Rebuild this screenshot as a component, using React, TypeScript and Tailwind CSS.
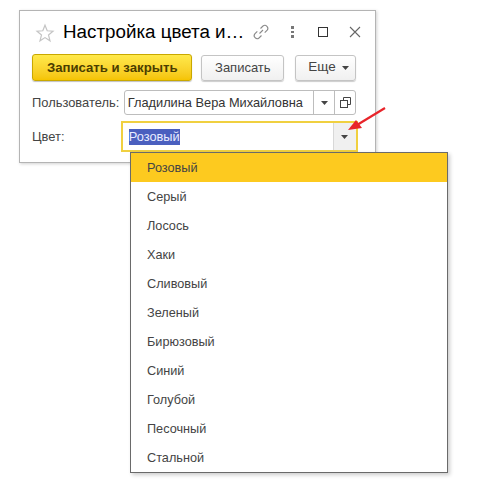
import React from "react";

const items = ["Розовый","Серый","Лосось","Хаки","Сливовый","Зеленый","Бирюзовый","Синий","Голубой","Песочный","Стальной"];

function Caret({ className = "" }: { className?: string }) {
  return (
    <svg width="7" height="4" viewBox="0 0 7 4" className={className}>
      <path d="M0 0H7L3.5 4Z" fill="#444" />
    </svg>
  );
}

export default function App() {
  return (
    <div className="relative w-[494px] h-[486px] bg-white overflow-hidden pt-[10px] pl-[19px] font-['Liberation_Sans',Arial,sans-serif] text-[#333]">
      <div className="w-[357px] h-[153px] bg-white border border-[#b4b4b4] shadow-[1px_1px_3px_rgba(0,0,0,0.18)] pl-[12px] pr-[19px] flex flex-col">
        <div className="h-[42px] flex items-center shrink-0">
          <svg width="20" height="20" viewBox="0 0 20 20" className="ml-[3px] mt-[1px] shrink-0">
            <path d="M10 2.2L12.2 7.8L18 8.2L13.5 12L15 17.8L10 14.6L5 17.8L6.5 12L2 8.2L7.8 7.8Z" fill="none" stroke="#c4c4c4" strokeWidth="1.2" />
          </svg>
          <span className="ml-[8px] text-[18.8px] leading-none text-black whitespace-nowrap w-[183px]">Настройка цвета и…</span>
          <svg width="18" height="18" viewBox="0 0 18 18" className="ml-[8px] shrink-0" fill="none" stroke="#8a8a8a" strokeWidth="1.1">
            <path d="M7.5 10.5L11 7" />
            <path d="M8.5 5.5L11 3a3 3 0 0 1 4.2 4.2L12.7 9.7" />
            <path d="M9.5 12.5L7 15a3 3 0 0 1-4.2-4.2L5.3 8.3" />
          </svg>
          <div className="ml-[21px] flex flex-col gap-[2px] shrink-0">
            <span className="w-[3px] h-[2.5px] bg-[#777]" />
            <span className="w-[3px] h-[2.5px] bg-[#777]" />
            <span className="w-[3px] h-[2.5px] bg-[#777]" />
          </div>
          <span className="ml-[24px] w-[10px] h-[10px] border-[1.5px] border-[#333] shrink-0" />
          <svg width="12" height="12" viewBox="0 0 12 12" className="ml-[21px] shrink-0" stroke="#666" strokeWidth="1.1">
            <path d="M1 1L11 11M11 1L1 11" />
          </svg>
        </div>
        <div className="h-[27px] flex items-center shrink-0 mt-[1px]">
          <button className="w-[161px] h-[27px] rounded-[3px] border border-[#c9a800] bg-gradient-to-b from-[#ffe94a] to-[#f5c400] shadow-[0_1px_1px_rgba(0,0,0,0.25)] text-[13.2px] font-bold text-[#4a3d00]">Записать и закрыть</button>
          <button className="ml-[9px] w-[83px] h-[26px] rounded-[3px] border border-[#c4c4c4] bg-gradient-to-b from-white to-[#f0f0f0] shadow-[0_1px_1px_rgba(0,0,0,0.2)] text-[13px] text-[#444]">Записать</button>
          <button className="ml-[11px] w-[61px] h-[26px] rounded-[3px] border border-[#c4c4c4] bg-gradient-to-b from-white to-[#f0f0f0] shadow-[0_1px_1px_rgba(0,0,0,0.2)] text-[13.5px] text-[#444] flex items-center justify-center gap-[6px] pl-[6px]">
            Еще <Caret />
          </button>
        </div>
        <div className="h-[25px] mt-[9px] flex items-center shrink-0">
          <span className="w-[92px] text-[12.9px] text-[#444] whitespace-nowrap">Пользователь:</span>
          <div className="w-[233px] h-[25px] rounded-[3px] border border-[#bdbdbd] flex items-center text-[12.8px] text-[#333]">
            <span className="flex-1 pl-[3px] whitespace-nowrap overflow-hidden">Гладилина Вера Михайловна</span>
            <span className="w-[21px] h-full border-l border-[#bdbdbd] flex items-center justify-center"><Caret /></span>
            <span className="w-[21px] h-full border-l border-[#bdbdbd] flex items-center justify-center">
              <svg width="11" height="11" viewBox="0 0 11 11" fill="none" stroke="#444" strokeWidth="1">
                <path d="M3.5 3.5V0.5H10.5V7.5H7.5" />
                <rect x="0.5" y="3.5" width="7" height="7" />
              </svg>
            </span>
          </div>
        </div>
        <div className="h-[31px] mt-[6px] flex items-center shrink-0">
          <span className="w-[89px] text-[12.9px] text-[#444]">Цвет:</span>
          <div className="w-[238px] h-[31px] border-2 border-[#f0d040] bg-white flex items-stretch -mr-[2px]">
            <div className="flex-1 pl-[6px] flex items-center text-[12.8px]">
              <span className="bg-[#4a5fbf] text-[#e8ecff] leading-[16px]">Розовый</span>
            </div>
            <span className="w-[23px] bg-[#f0f0f0] border-l border-[#d8d8d8] flex items-center justify-center pr-[1px]"><Caret /></span>
          </div>
        </div>
      </div>

      <div className="absolute left-[130px] top-[152px] w-[318px] h-[321px] bg-white border border-[#6a6a6a] shadow-[2px_2px_4px_rgba(0,0,0,0.2)]">
        {items.map((t, i) => (
          <div key={t} className={`h-[29px] pl-[16px] pt-[2px] flex items-center text-[12.7px] text-[#444] ${i === 0 ? "bg-[#fdca1f]" : ""}`}>{t}</div>
        ))}
      </div>

      <svg width="42" height="32" viewBox="0 0 42 32" className="absolute left-[346px] top-[104px]">
        <path d="M39 4L11 21" stroke="#e8242a" strokeWidth="2.2" />
        <path d="M2 26L10 16L16 24Z" fill="#e8242a" />
      </svg>
    </div>
  );
}
